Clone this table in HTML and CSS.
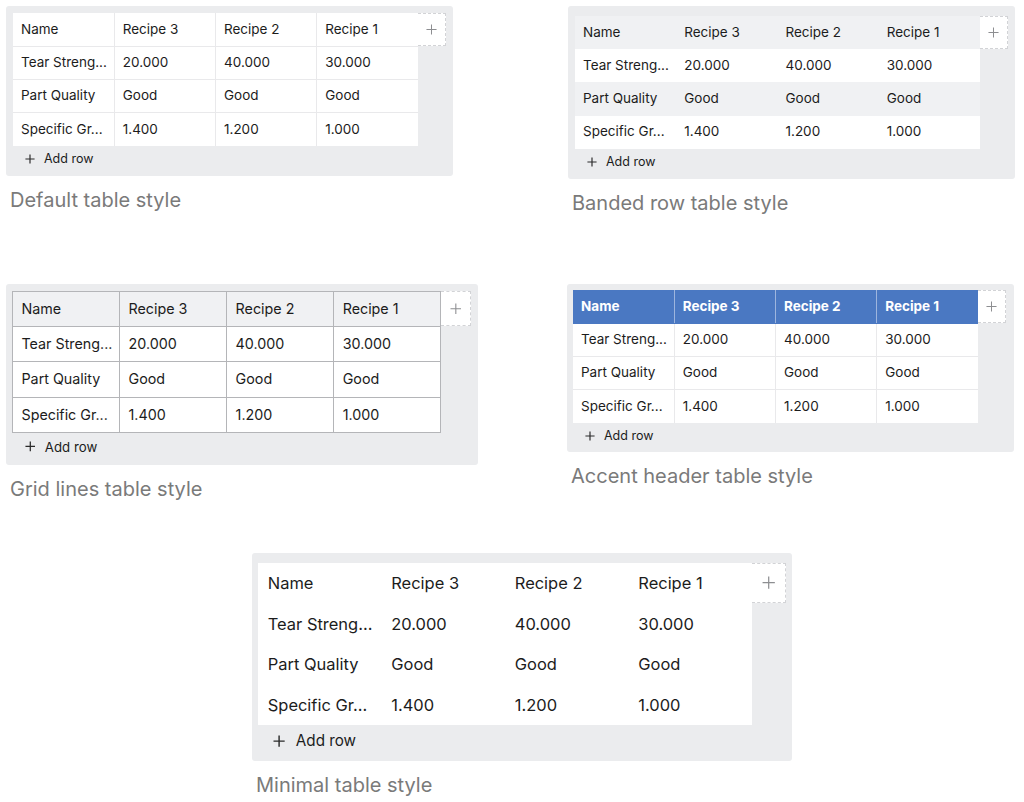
FILE: index.html
```html
<!DOCTYPE html>
<html lang="en">
<head>
<meta charset="utf-8">
<title>Table styles</title>
<link rel="stylesheet" href="styles.css">
</head>
<body>
<main class="page">
  <div class="row row-top">
    <figure class="fig">
      <div class="panel panel-default">
        <div class="sheet">
          <table class="tbl">
            <tr><th>Name</th><th>Recipe 3</th><th>Recipe 2</th><th>Recipe 1</th></tr>
            <tr><td>Tear Streng...</td><td>20.000</td><td>40.000</td><td>30.000</td></tr>
            <tr><td>Part Quality</td><td>Good</td><td>Good</td><td>Good</td></tr>
            <tr><td>Specific Gr...</td><td>1.400</td><td>1.200</td><td>1.000</td></tr>
          </table>
          <div class="addcol"><svg viewBox="0 0 12 12"><path d="M6 0.5v11M0.5 6h11"/></svg></div>
        </div>
        <div class="addrow"><svg viewBox="0 0 12 12"><path d="M6 0.5v11M0.5 6h11"/></svg><span>Add row</span></div>
      </div>
      <figcaption class="caption">Default table style</figcaption>
    </figure>
    <figure class="fig fig-shift">
      <div class="panel panel-banded">
        <div class="sheet">
          <table class="tbl">
            <tr><th>Name</th><th>Recipe 3</th><th>Recipe 2</th><th>Recipe 1</th></tr>
            <tr><td>Tear Streng...</td><td>20.000</td><td>40.000</td><td>30.000</td></tr>
            <tr><td>Part Quality</td><td>Good</td><td>Good</td><td>Good</td></tr>
            <tr><td>Specific Gr...</td><td>1.400</td><td>1.200</td><td>1.000</td></tr>
          </table>
          <div class="addcol"><svg viewBox="0 0 12 12"><path d="M6 0.5v11M0.5 6h11"/></svg></div>
        </div>
        <div class="addrow"><svg viewBox="0 0 12 12"><path d="M6 0.5v11M0.5 6h11"/></svg><span>Add row</span></div>
      </div>
      <figcaption class="caption">Banded row table style</figcaption>
    </figure>
  </div>

  <div class="row row-mid">
    <figure class="fig">
      <div class="panel panel-grid">
        <div class="sheet">
          <table class="tbl">
            <tr><th>Name</th><th>Recipe 3</th><th>Recipe 2</th><th>Recipe 1</th></tr>
            <tr><td>Tear Streng...</td><td>20.000</td><td>40.000</td><td>30.000</td></tr>
            <tr><td>Part Quality</td><td>Good</td><td>Good</td><td>Good</td></tr>
            <tr><td>Specific Gr...</td><td>1.400</td><td>1.200</td><td>1.000</td></tr>
          </table>
          <div class="addcol"><svg viewBox="0 0 12 12"><path d="M6 0.5v11M0.5 6h11"/></svg></div>
        </div>
        <div class="addrow"><svg viewBox="0 0 12 12"><path d="M6 0.5v11M0.5 6h11"/></svg><span>Add row</span></div>
      </div>
      <figcaption class="caption">Grid lines table style</figcaption>
    </figure>
    <figure class="fig">
      <div class="panel panel-accent">
        <div class="sheet">
          <table class="tbl">
            <tr><th>Name</th><th>Recipe 3</th><th>Recipe 2</th><th>Recipe 1</th></tr>
            <tr><td>Tear Streng...</td><td>20.000</td><td>40.000</td><td>30.000</td></tr>
            <tr><td>Part Quality</td><td>Good</td><td>Good</td><td>Good</td></tr>
            <tr><td>Specific Gr...</td><td>1.400</td><td>1.200</td><td>1.000</td></tr>
          </table>
          <div class="addcol"><svg viewBox="0 0 12 12"><path d="M6 0.5v11M0.5 6h11"/></svg></div>
        </div>
        <div class="addrow"><svg viewBox="0 0 12 12"><path d="M6 0.5v11M0.5 6h11"/></svg><span>Add row</span></div>
      </div>
      <figcaption class="caption">Accent header table style</figcaption>
    </figure>
  </div>

  <div class="row-bottom">
    <figure class="fig">
      <div class="panel panel-minimal">
        <div class="sheet">
          <table class="tbl">
            <tr><th>Name</th><th>Recipe 3</th><th>Recipe 2</th><th>Recipe 1</th></tr>
            <tr><td>Tear Streng...</td><td>20.000</td><td>40.000</td><td>30.000</td></tr>
            <tr><td>Part Quality</td><td>Good</td><td>Good</td><td>Good</td></tr>
            <tr><td>Specific Gr...</td><td>1.400</td><td>1.200</td><td>1.000</td></tr>
          </table>
          <div class="addcol"><svg viewBox="0 0 12 12"><path d="M6 0.5v11M0.5 6h11"/></svg></div>
        </div>
        <div class="addrow"><svg viewBox="0 0 12 12"><path d="M6 0.5v11M0.5 6h11"/></svg><span>Add row</span></div>
      </div>
      <figcaption class="caption">Minimal table style</figcaption>
    </figure>
  </div>
</main>
</body>
</html>
```

FILE: styles.css
```css
body {
  margin: 0;
  background: #ffffff;
  font-family: Inter, "Noto Sans", "Liberation Sans", sans-serif;
  color: #1c1c1c;
}

.page {
  padding-top: 6px;
}

.row {
  display: grid;
  grid-template-columns: 561px 1fr;
  padding-left: 6px;
  align-items: start;
}

.row-top { height: 278px; }
.row-mid { height: 269px; }

.row-bottom {
  padding-left: 252px;
}

.fig {
  margin: 0;
  display: flex;
  flex-direction: column;
  align-items: flex-start;
}

.fig-shift { margin-left: 1px; }

/* ---------- panel ---------- */
.panel {
  --k: 1;
  --pt: 7px;
  --pl: 7px;
  --pr: 7px;
  --pb: 4px;
  background: #ebecee;
  border-radius: 3px;
  padding: var(--pt) var(--pr) var(--pb) var(--pl);
  font-size: calc(13.5px * var(--k));
}

.panel-banded { --pt: 10px; }
.panel-grid { --k: 1.06; --pl: 6px; --pr: 7px; --pb: 5px; }
.panel-accent { --pt: 6px; --pl: 6px; --pr: 8px; --pb: 3px; }
.panel-minimal { --k: 1.22; --pt: 10px; --pl: 6px; --pr: 6px; --pb: 4px; }

.sheet {
  display: flex;
  align-items: flex-start;
}

.tbl {
  border-collapse: collapse;
  table-layout: fixed;
  width: calc(405px * var(--k));
  background: #ffffff;
  border-style: hidden;
}

.tbl th,
.tbl td {
  box-sizing: border-box;
  height: calc(33.2px * var(--k));
  padding: 0 0 0 calc(8px * var(--k));
  text-align: left;
  font-weight: 400;
  white-space: nowrap;
  overflow: hidden;
  border: 1px solid #e9e9eb;
  line-height: 1;
}

/* add column cell */
.addcol {
  box-sizing: border-box;
  width: calc(28px * var(--k));
  height: calc(33px * var(--k));
  background: #ffffff;
  border: 1px dashed #d2d3d6;
  border-left: none;
  display: flex;
  align-items: center;
  justify-content: center;
  color: #8d8e91;
}

.addcol svg {
  width: calc(11px * var(--k));
  height: calc(11px * var(--k));
  fill: none;
  stroke: currentColor;
  stroke-width: 1.1;
}

/* add row */
.addrow {
  height: calc(26px * var(--k));
  display: flex;
  align-items: center;
  padding-left: calc(12px * var(--k));
  font-size: calc(12.5px * var(--k));
  color: #1c1c1c;
}

.addrow svg {
  width: calc(10px * var(--k));
  height: calc(10px * var(--k));
  fill: none;
  stroke: #2a2a2a;
  stroke-width: 1.4;
  margin-right: calc(9px * var(--k));
}

/* caption */
.caption {
  margin-top: 11px;
  padding-left: 4px;
  font-size: 20px;
  line-height: 26px;
  color: #7a7a7a;
}

/* ---------- banded ---------- */
.panel-banded .tbl th,
.panel-banded .tbl td {
  border: none;
}

.panel-banded .tbl tr:nth-child(odd) {
  background: #f0f1f3;
}

/* ---------- grid ---------- */
.panel-grid .tbl {
  border: 1px solid #b4b5b8;
}

.panel-grid .tbl th,
.panel-grid .tbl td {
  border: 1px solid #b4b5b8;
}

.panel-grid .tbl th {
  background: #f0f1f3;
}

/* ---------- accent ---------- */
.panel-accent .tbl th {
  background: #4a78c2;
  color: #ffffff;
  font-weight: 700;
  border-color: #9db5de;
  border-bottom-color: #4a78c2;
}

/* ---------- minimal ---------- */
.panel-minimal .tbl th,
.panel-minimal .tbl td {
  border: none;
}
```
